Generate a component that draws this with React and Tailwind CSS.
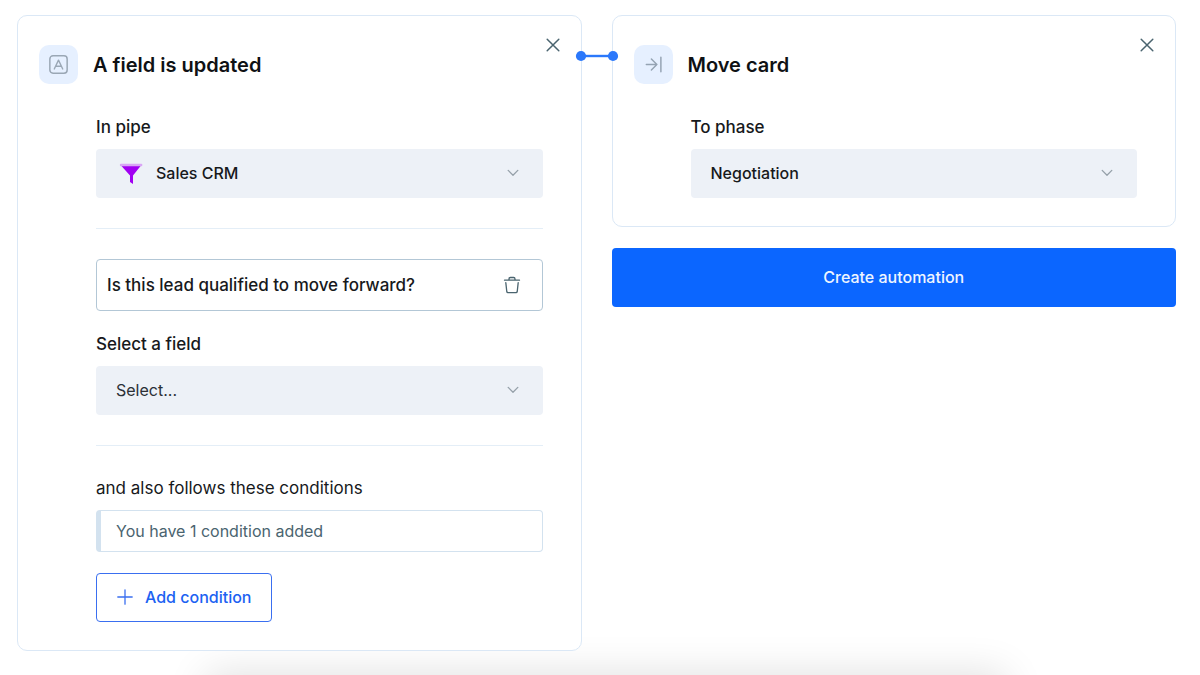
import React, { useState } from "react";

const CloseIcon = () => (
	<svg width="14" height="14" viewBox="0 0 14 14" fill="none">
		<path
			d="M1.2 1.2l11.6 11.6M12.8 1.2L1.2 12.8"
			stroke="#4a646f"
			strokeWidth="1.5"
			strokeLinecap="round"
		/>
	</svg>
);

const LetterIcon = () => (
	<svg width="19" height="19" viewBox="0 0 18 18" fill="none" stroke="#9aa7b5">
		<rect x="0.8" y="0.8" width="16.4" height="16.4" rx="3" strokeWidth="1.4" />
		<path
			d="M5 13.2L9 4.9l4 8.3M6.3 10.6h5.4"
			strokeWidth="1.3"
			strokeLinecap="round"
			strokeLinejoin="round"
		/>
	</svg>
);

const MoveIcon = () => (
	<svg width="19" height="19" viewBox="0 0 18 18" fill="none" stroke="#95a3b3">
		<path
			d="M2.2 9h10M7 3.8L12.2 9 7 14.2M16 2.2v13.6"
			strokeWidth="1.4"
			strokeLinecap="round"
			strokeLinejoin="round"
		/>
	</svg>
);

const FunnelIcon = () => (
	<svg width="24" height="22" viewBox="0 0 24 22">
		<path d="M2 2.5h20L14 12.6v8.4l-3-2v-6.4z" fill="#a100f2" />
		<rect x="0.8" y="0.8" width="22.6" height="2.4" rx="1.2" fill="#d9a6f5" />
	</svg>
);

const TrashIcon = () => (
	<svg width="18" height="18" viewBox="0 0 18 18" fill="none" stroke="#4a646f">
		<path
			d="M1.5 4.2h15M6 4V2.9c0-.9.5-1.4 1.4-1.4h3.2c.9 0 1.4.5 1.4 1.4V4M2.8 6.6l1 9.1c.1.6.5 1 1.1 1h8.2c.6 0 1-.4 1.1-1l1-9.1"
			strokeWidth="1.3"
			strokeLinecap="round"
			strokeLinejoin="round"
		/>
	</svg>
);

const Card = ({ icon, title, children }) => (
	<section className="relative rounded-[10px] border border-[#dbe8f6] bg-white pt-[29px] pr-[38px] pb-7 pl-[21px]">
		<button
			type="button"
			aria-label="Close"
			className="absolute top-[22px] right-[21px] cursor-pointer"
		>
			<CloseIcon />
		</button>
		<header className="flex items-center gap-[15px]">
			<span className="flex h-[39px] w-[39px] items-center justify-center rounded-[10px] bg-[#e6f0ff]">
				{icon}
			</span>
			<h2 className="text-[20px] leading-6 font-semibold text-[#0f1114]">
				{title}
			</h2>
		</header>
		<div className="mt-[31px] ml-[57px]">{children}</div>
	</section>
);

const SelectField = ({ id, label, options, icon, muted }) => (
	<div>
		<label
			htmlFor={id}
			className="mb-[10px] block text-[17px] leading-6 font-medium text-[#17191c]"
		>
			{label}
		</label>
		<div className="relative">
			{icon && <span className="absolute top-[14px] left-[23px]">{icon}</span>}
			<select
				id={id}
				className={`block h-[49px] w-full appearance-none rounded-[4px] bg-[#edf1f7] pr-12 pb-px text-[16px] ${
					icon ? "pl-[60px]" : "pl-5"
				} ${muted ? "text-[#2b3036]" : "font-medium text-[#17191c]"}`}
			>
				{options.map((option) => (
					<option key={option}>{option}</option>
				))}
			</select>
			<svg
				className="pointer-events-none absolute top-5 right-6"
				width="12"
				height="8"
				viewBox="0 0 12 8"
				fill="none"
			>
				<path
					d="M1.2 1.4L6 6.2l4.8-4.8"
					stroke="#95a0a9"
					strokeWidth="1.3"
					strokeLinecap="round"
					strokeLinejoin="round"
				/>
			</svg>
		</div>
	</div>
);

const Divider = () => <hr className="my-[30px] border-[#e4eef7]" />;

const App = () => {
	const [question, setQuestion] = useState(
		"Is this lead qualified to move forward?"
	);

	return (
		<main className="relative min-h-screen overflow-hidden bg-white pt-[15px] pr-6 pb-6 pl-[17px] font-[Inter,sans-serif]">
			{/* Shadow of the panel below */}
			<div className="absolute -bottom-12 left-[18%] h-10 w-[65%] shadow-[0_0_40px_10px_rgba(0,0,0,0.12)]" />

			<div className="relative grid grid-cols-2 items-start gap-[30px]">
				<Card icon={<LetterIcon />} title="A field is updated">
					<SelectField
						id="pipe"
						label="In pipe"
						options={["Sales CRM"]}
						icon={<FunnelIcon />}
					/>
					<Divider />
					<div className="flex h-[52px] items-center rounded-[4px] border border-[#b3c7d6] pr-[21px] pl-[10px]">
						<input
							type="text"
							aria-label="Question"
							value={question}
							onChange={(e) => setQuestion(e.target.value)}
							className="min-w-0 flex-1 text-[17px] leading-6 font-medium text-[#17191c] outline-none"
						/>
						<button
							type="button"
							aria-label="Delete"
							className="cursor-pointer"
						>
							<TrashIcon />
						</button>
					</div>
					<div className="mt-[21px]">
						<SelectField
							id="field"
							label="Select a field"
							options={["Select..."]}
							muted
						/>
					</div>
					<Divider />
					<p className="mb-[10px] text-[17px] leading-6 text-[#17191c]">
						and also follows these conditions
					</p>
					<div className="flex h-[42px] items-center rounded-[4px] border border-l-[5px] border-[#d3e2ef] pl-[15px] text-[16px] text-[#4a646f]">
						You have 1 condition added
					</div>
					<button
						type="button"
						className="mt-[21px] flex h-[49px] cursor-pointer items-center gap-3 rounded-[4px] border border-[#3a6ff0] px-5 pb-px text-[16px] font-medium text-[#1c62f2]"
					>
						<svg width="16" height="16" viewBox="0 0 16 16" fill="none">
							<path
								d="M8 .8v14.4M.8 8h14.4"
								stroke="#3a6ff0"
								strokeWidth="1.3"
								strokeLinecap="round"
							/>
						</svg>
						Add condition
					</button>
				</Card>

				<div className="relative">
					{/* Connector between the two cards */}
					<svg
						className="absolute top-[35px] -left-[37px] z-10"
						width="44"
						height="12"
						viewBox="0 0 44 12"
						fill="#2b78fb"
					>
						<rect x="6" y="4.8" width="32" height="2.4" />
						<circle cx="6" cy="6" r="5.1" />
						<circle cx="38" cy="6" r="5.1" />
					</svg>
					<Card icon={<MoveIcon />} title="Move card">
						<SelectField
							id="phase"
							label="To phase"
							options={["Negotiation"]}
						/>
					</Card>
					<button
						type="button"
						className="mt-[21px] h-[59px] w-full cursor-pointer rounded-[4px] bg-[#0b66ff] pb-px text-[16px] font-medium text-[#eef5ff]"
					>
						Create automation
					</button>
				</div>
			</div>
		</main>
	);
};

export default App;
